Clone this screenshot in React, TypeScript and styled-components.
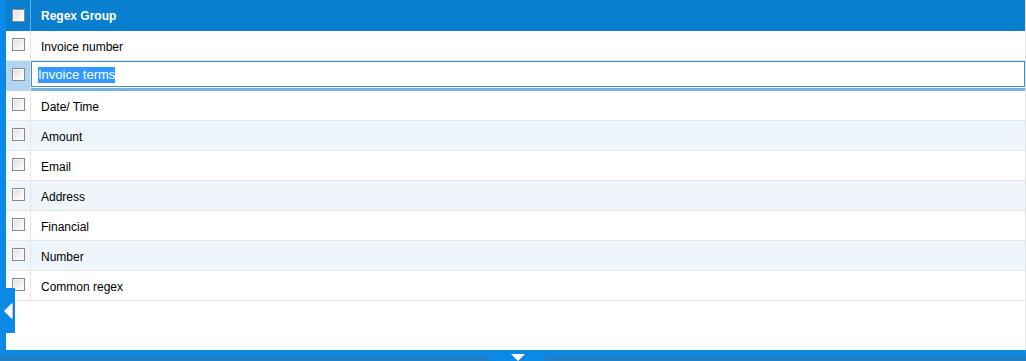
import React from "react";
import styled, { createGlobalStyle } from "styled-components";

const GlobalStyle = createGlobalStyle`
  html, body {
    margin: 0;
    padding: 0;
    background: #ffffff;
    font-family: "Liberation Sans", Arial, sans-serif;
    font-size: 12px;
  }
`;

const Page = styled.div`
  position: relative;
  width: 1026px;
  height: 361px;
  display: flex;
  flex-direction: column;
  overflow: hidden;
`;

const Main = styled.div`
  flex: 1;
  display: flex;
  min-height: 0;
`;

const SideBar = styled.div`
  width: 6px;
  background: #0a8ae6;
`;

const Grid = styled.div`
  flex: 1;
  display: flex;
  flex-direction: column;
  border-right: 1px solid #e2e2e2;
`;

const HeaderRow = styled.div`
  display: flex;
  height: 31px;
  background: #0a7ecf;
  color: #ffffff;
  font-weight: bold;
`;

const Row = styled.div<{ $alt?: boolean }>`
  display: flex;
  height: 30px;
  background: ${(p) => (p.$alt ? "#eef5fb" : "#ffffff")};
  border-bottom: 1px solid #e6e6e6;
  box-sizing: border-box;
  color: #000000;
`;

const CheckCell = styled.div<{ $head?: boolean; $active?: boolean }>`
  width: 25px;
  flex-shrink: 0;
  display: flex;
  justify-content: center;
  align-items: ${(p) => (p.$head ? "center" : "flex-start")};
  padding-top: ${(p) => (p.$head ? "0" : "7px")};
  box-sizing: border-box;
  border-right: 1px solid ${(p) => (p.$head ? "#6aa9dc" : "#e6e6e6")};
  background: ${(p) => (p.$active ? "#b3d4ee" : "transparent")};
`;

const Box = styled.span`
  width: 11px;
  height: 11px;
  border: 1px solid #8a8a8a;
  background: linear-gradient(135deg, #dcdcdc 0%, #f4f4f4 60%, #ffffff 100%);
  box-shadow: inset 0 0 0 1px #f7f7f7;
  display: block;
`;

const TextCell = styled.div<{ $head?: boolean }>`
  flex: 1;
  display: flex;
  align-items: center;
  padding-left: 10px;
  padding-top: ${(p) => (p.$head ? "0" : "2px")};
`;

const EditRow = styled.div`
  display: flex;
  height: 30px;
`;

const EditCell = styled.div`
  flex: 1;
  display: flex;
  flex-direction: column;
`;

const Editor = styled.div`
  height: 26px;
  border: 1px solid #3c8fd0;
  box-sizing: border-box;
  display: flex;
  align-items: center;
  padding-left: 6px;
  padding-top: 1px;
  background: #ffffff;
`;

const EditStrip = styled.div`
  height: 4px;
  background: #78b1e2;
  border-top: 1px solid #ffffff;
  box-sizing: border-box;
`;

const Selected = styled.span`
  background: #3399ff;
  color: #ffffff;
  font-size: 13px;
  line-height: 16px;
`;

const Filler = styled.div`
  flex: 1;
`;

const BottomBar = styled.div`
  height: 11px;
  display: flex;
  justify-content: center;
  background: linear-gradient(#0a8ae6 0, #0a8ae6 5px, #1e7fcb 5px);
`;

const BottomTab = styled.div`
  width: 55px;
  margin-left: 9px;
  background: #0a8ae6;
  display: flex;
  justify-content: center;
  align-items: flex-end;
`;

const DownArrow = styled.div`
  width: 0;
  height: 0;
  border-left: 7px solid transparent;
  border-right: 7px solid transparent;
  border-top: 7px solid #ffffff;
`;

const SideTab = styled.div`
  position: absolute;
  left: 0;
  top: 288px;
  width: 15px;
  height: 45px;
  background: #0a8ae6;
  display: flex;
  align-items: center;
  padding-left: 4px;
  box-sizing: border-box;
`;

const LeftArrow = styled.div`
  width: 0;
  height: 0;
  border-top: 8px solid transparent;
  border-bottom: 8px solid transparent;
  border-right: 8px solid #ffffff;
  filter: drop-shadow(1px 0 0 #c9b8f0);
`;

const items = [
  "Invoice number",
  "Invoice terms",
  "Date/ Time",
  "Amount",
  "Email",
  "Address",
  "Financial",
  "Number",
  "Common regex",
];

const App: React.FC = () => {
  return (
    <Page>
      <GlobalStyle />
      <Main>
        <SideBar />
        <Grid>
          <HeaderRow>
            <CheckCell $head>
              <Box />
            </CheckCell>
            <TextCell $head>Regex Group</TextCell>
          </HeaderRow>
          {items.map((name, i) =>
            i === 1 ? (
              <EditRow key={name}>
                <CheckCell $active>
                  <Box />
                </CheckCell>
                <EditCell>
                  <Editor>
                    <Selected>{name}</Selected>
                  </Editor>
                  <EditStrip />
                </EditCell>
              </EditRow>
            ) : (
              <Row key={name} $alt={i % 2 === 1}>
                <CheckCell>
                  <Box />
                </CheckCell>
                <TextCell>{name}</TextCell>
              </Row>
            )
          )}
          <Filler />
        </Grid>
      </Main>
      <BottomBar>
        <BottomTab>
          <DownArrow />
        </BottomTab>
      </BottomBar>
      <SideTab>
        <LeftArrow />
      </SideTab>
    </Page>
  );
};

export default App;
